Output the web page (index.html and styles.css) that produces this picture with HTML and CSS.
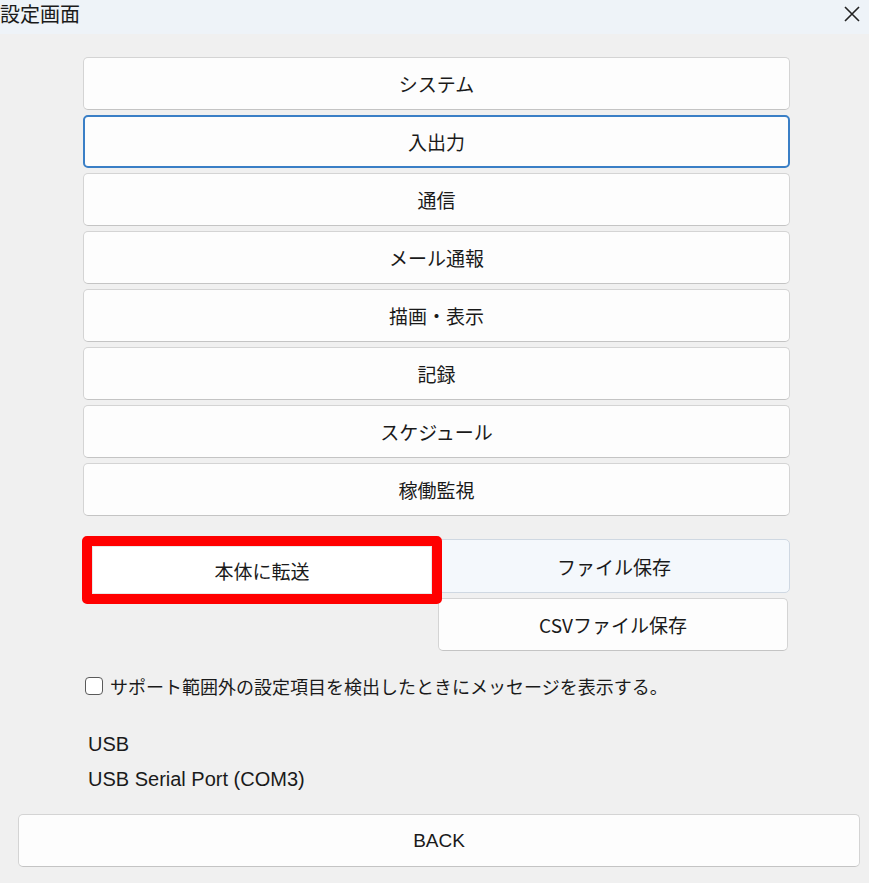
FILE: index.html
```html
<!DOCTYPE html>
<html lang="ja">
<head>
  <meta charset="UTF-8" />
  <title>設定画面</title>
  <link rel="stylesheet" href="styles.css">
</head>
<body>
  <div class="titlebar">
    <span class="title">設定画面</span>
    <svg class="close" width="16" height="16" viewBox="0 0 16 16">
      <path d="M1 1L15 15M15 1L1 15" stroke="#222" stroke-width="1.6" fill="none"/>
    </svg>
  </div>

  <div class="content">
    <div class="menu">
      <button class="btn">システム</button>
      <button class="btn selected">入出力</button>
      <button class="btn">通信</button>
      <button class="btn">メール通報</button>
      <button class="btn">描画・表示</button>
      <button class="btn">記録</button>
      <button class="btn">スケジュール</button>
      <button class="btn">稼働監視</button>
    </div>

    <div class="actions">
      <div class="left">
        <div class="highlight">
          <button class="btn transfer">本体に転送</button>
        </div>
      </div>
      <div class="right">
        <button class="btn hover">ファイル保存</button>
        <button class="btn csv">CSVファイル保存</button>
      </div>
    </div>

    <label class="check">
      <span class="box"></span>
      <span>サポート範囲外の設定項目を検出したときにメッセージを表示する。</span>
    </label>

    <div class="port">
      <p>USB</p>
      <p>USB Serial Port (COM3)</p>
    </div>
  </div>

  <div class="footer">
    <button class="btn back">BACK</button>
  </div>
</body>
</html>
```

FILE: styles.css
```css
body {
  margin: 0;
  width: 869px;
  height: 883px;
  background: #f0f0f0;
  font-family: "Noto Sans CJK JP", "Liberation Sans", sans-serif;
  color: #1a1a1a;
  overflow: hidden;
}

.titlebar {
  height: 34px;
  background: #eef3f8;
  display: flex;
  justify-content: space-between;
  align-items: center;
  padding: 0 9px 6px 0;
  box-sizing: border-box;
}

.title {
  font-size: 20px;
  line-height: 1;
}

.content {
  padding: 23px 0 0 83px;
  width: 707px;
}

.menu {
  display: flex;
  flex-direction: column;
  gap: 5px;
}

.btn {
  display: block;
  width: 100%;
  height: 53px;
  background: #fdfdfd;
  border: 1px solid #d4d4d4;
  border-bottom-color: #c4c4c4;
  border-radius: 5px;
  font-family: inherit;
  font-size: 19px;
  color: #1a1a1a;
  padding: 0;
}

.btn.selected {
  border: 2px solid #3a7fc6;
}

.actions {
  display: flex;
  margin-top: 20px;
}

.left {
  width: 355px;
  flex-shrink: 0;
  margin-left: -1px;
}

.highlight {
  position: relative;
  z-index: 1;
  width: 360px;
  height: 68px;
  box-sizing: border-box;
  border: 10px solid #ff0000;
  border-radius: 5px;
}

.btn.transfer {
  height: 48px;
  background: #fff;
  border-radius: 0;
  border-color: #e8e8e8;
}

.right {
  width: 352px;
  flex-shrink: 0;
  margin-left: 1px;
  padding-top: 3px;
  display: flex;
  flex-direction: column;
  gap: 5px;
}

.btn.hover {
  height: 54px;
  background: #f4f8fc;
  border-color: #cfd8e2;
}

.btn.csv {
  width: 350px;
}

.check {
  display: flex;
  align-items: center;
  gap: 7px;
  margin: 22px 0 0 2px;
  font-size: 18px;
  white-space: nowrap;
}

.box {
  width: 16px;
  height: 16px;
  border: 1.5px solid #5a5a5a;
  border-radius: 4px;
  background: #fff;
}

.port {
  margin: 34px 0 0 5px;
  font-family: "Liberation Sans", sans-serif;
  font-size: 20px;
}

.port p {
  margin: 0 0 12px;
}

.footer {
  position: absolute;
  left: 18px;
  top: 814px;
  width: 842px;
}

.btn.back {
  font-family: "Liberation Sans", sans-serif;
  font-size: 19px;
}
```
